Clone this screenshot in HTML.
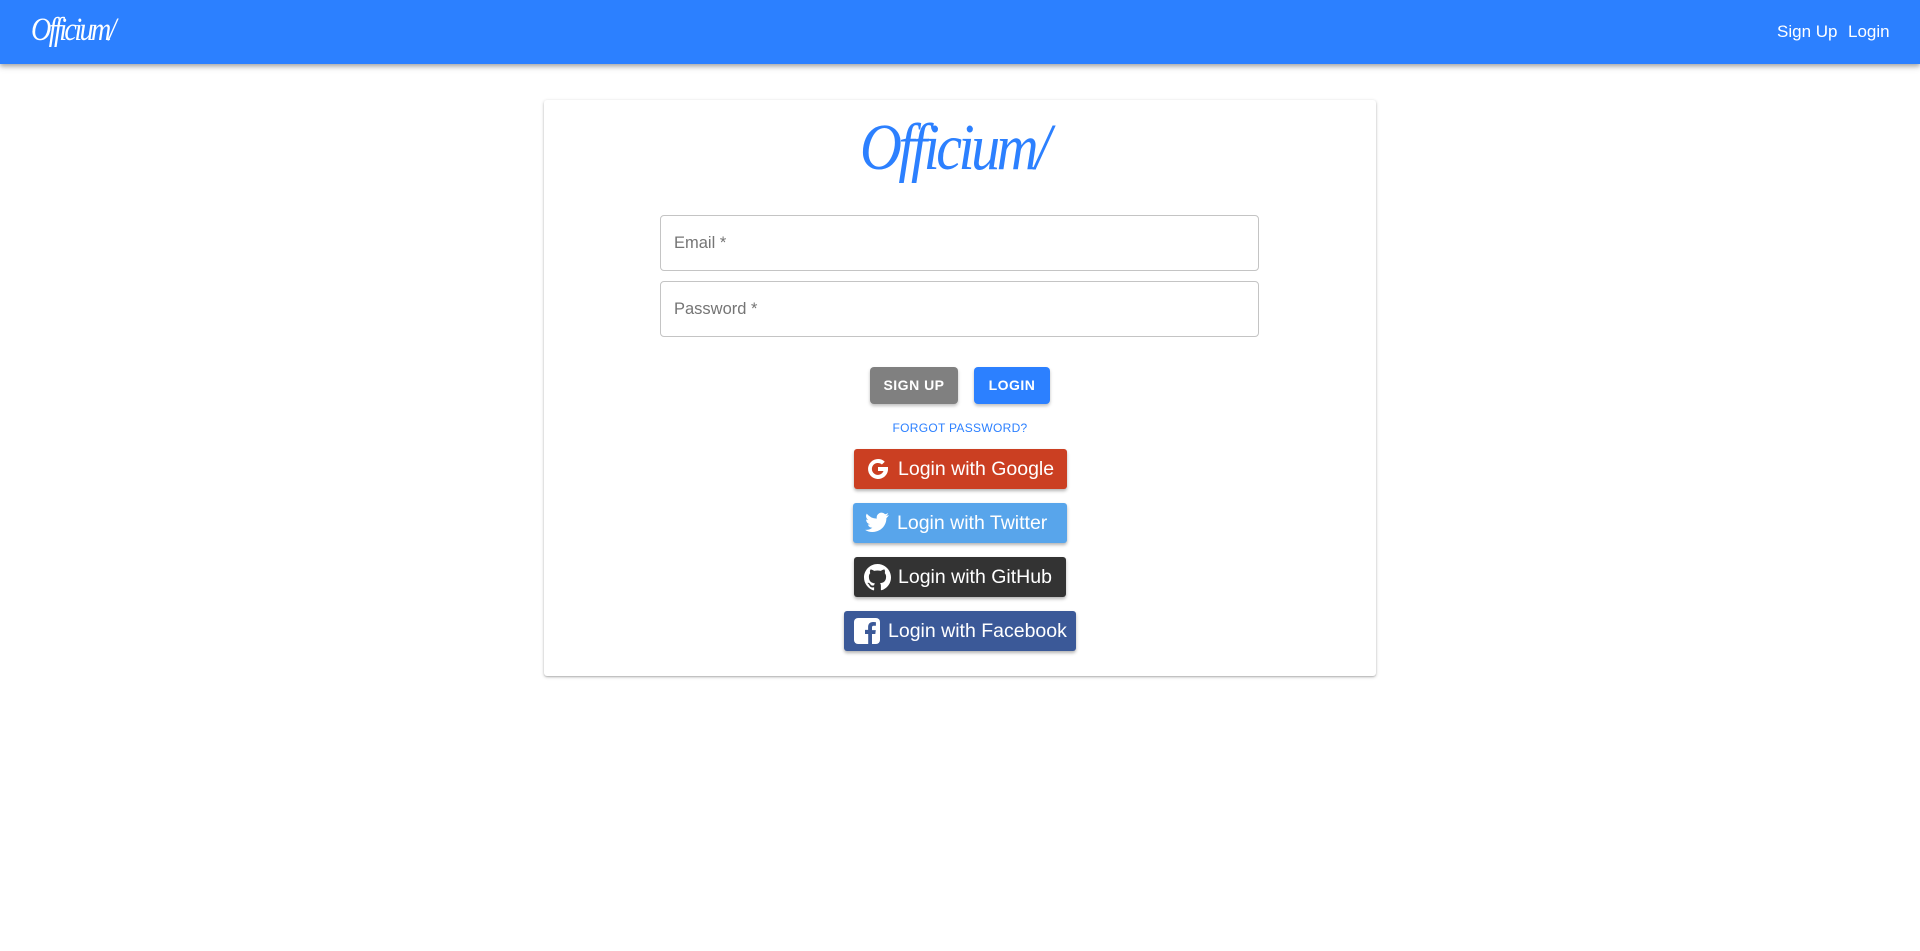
<!DOCTYPE html>
<html><head><meta charset="utf-8"><style>
*{box-sizing:border-box;margin:0;padding:0}
body{width:1920px;height:951px;background:#fff;font-family:"Liberation Sans",sans-serif;position:relative;overflow:hidden}
.hdr{position:absolute;left:0;top:0;width:1920px;height:64px;background:#2c80ff;box-shadow:0 2px 4px rgba(0,0,0,.25),0 4px 6px rgba(0,0,0,.12)}
.logo{position:absolute;font-family:"Liberation Serif",serif;font-style:italic;color:#fff}
.nav{position:absolute;top:22px;color:#fff;font-size:17px}
.card{position:absolute;left:544px;top:100px;width:832px;height:576px;background:#fff;border-radius:3px;box-shadow:0 1px 3px rgba(0,0,0,.25),0 1px 1px rgba(0,0,0,.12)}
.inp{position:absolute;left:660px;width:599px;height:56px;border:1px solid #c4c4c4;border-radius:4px;color:#757575;font-size:16.5px;padding:18px 0 0 13px}
.btn{position:absolute;top:367px;height:37px;border-radius:4px;color:#fff;font-size:14px;font-weight:bold;letter-spacing:.5px;text-align:center;line-height:37px;box-shadow:0 2px 3px rgba(0,0,0,.25)}
.soc{position:absolute;height:40px;border-radius:3px;color:#fff;font-size:19.5px;line-height:40px;box-shadow:0 2px 3px rgba(0,0,0,.3);white-space:nowrap}
.soc svg{position:absolute;top:7px}
</style></head><body>
<div class="hdr">
 <div class="logo" style="left:31px;top:12px;font-size:33px;letter-spacing:-3px;transform:scaleX(.85);transform-origin:left">Officium/</div>
 <div class="nav" style="left:1777px">Sign Up</div>
 <div class="nav" style="left:1848px">Login</div>
</div>
<div class="card"></div>
<div class="logo" style="left:860px;top:110px;font-size:66px;color:#2c80ff;letter-spacing:-4px;transform:scaleX(.88);transform-origin:left">Officium/</div>
<div class="inp" style="top:215px">Email *</div>
<div class="inp" style="top:281px">Password *</div>
<div class="btn" style="left:870px;width:88px;background:#808080">SIGN UP</div>
<div class="btn" style="left:974px;width:76px;background:#2c80ff">LOGIN</div>
<div style="position:absolute;left:0;width:1920px;top:421px;text-align:center;color:#2c80ff;font-size:12px;letter-spacing:.3px">FORGOT PASSWORD?</div>
<div class="soc" style="left:854px;top:449px;width:213px;background:#cb3f22;padding-left:44px">
<svg style="left:11px" width="26" height="26" viewBox="0 0 26 26"><path d="M13 3a10 10 0 1 0 10 11v-3H13v4h5.5a6 6 0 1 1-1.6-6.5l2.9-2.8A10 10 0 0 0 13 3z" fill="#fff"/></svg>Login with Google</div>
<div class="soc" style="left:853px;top:503px;width:214px;background:#58a5eb;padding-left:44px">
<svg style="left:10px" width="28" height="26" viewBox="0 0 24 24"><path fill="#fff" d="M23 4.6a9 9 0 0 1-2.6.7 4.5 4.5 0 0 0 2-2.5 9 9 0 0 1-2.9 1.1 4.5 4.5 0 0 0-7.7 4.1A12.8 12.8 0 0 1 2.5 3.3a4.5 4.5 0 0 0 1.4 6 4.5 4.5 0 0 1-2-.6 4.5 4.5 0 0 0 3.6 4.5 4.5 4.5 0 0 1-2 .1 4.5 4.5 0 0 0 4.2 3.1A9 9 0 0 1 1 18.3 12.8 12.8 0 0 0 20.7 7.5 9 9 0 0 0 23 4.6z"/></svg>Login with Twitter</div>
<div class="soc" style="left:854px;top:557px;width:212px;background:#333;padding-left:44px">
<svg style="left:10px" width="27" height="27" viewBox="0 0 16 16"><path fill="#fff" d="M8 0C3.6 0 0 3.6 0 8c0 3.500 2.3 6.5 5.5 7.6.4.1.5-.2.5-.4v-1.4c-2.2.5-2.7-1-2.7-1-.4-.9-.9-1.2-.9-1.200-.7-.5.1-.5.1-.5.8.1 1.2.8 1.2.8.7 1.2 1.9.9 2.3.7.1-.5.3-.9.5-1.1-1.8-.2-3.6-.9-3.6-4 0-.9.3-1.6.8-2.1-.1-.2-.4-1 .1-2.1 0 0 .7-.2 2.2.8a7.5 7.5 0 0 1 4 0c1.5-1 2.2-.8 2.2-.8.4 1.1.2 1.9.1 2.1.5.6.8 1.3.8 2.1 0 3.1-1.9 3.7-3.6 3.9.3.3.5.8.5 1.5v2.2c0 .2.1.5.6.4A8 8 0 0 0 16 8c0-4.4-3.6-8-8-8z"/></svg>Login with GitHub</div>
<div class="soc" style="left:844px;top:611px;width:232px;background:#3b5998;padding-left:44px">
<svg style="left:10px" width="26" height="26" viewBox="0 0 26 26"><rect width="26" height="26" rx="4" fill="#fff"/><path fill="#3b5998" d="M18 26V16h3.3l.5-3.9H18V9.6c0-1.1.3-1.9 1.9-1.9h2V4.2c-.4 0-1.6-.2-2.9-.2-2.9 0-4.9 1.8-4.9 5v2.9H11V16h3.2v10z"/></svg>Login with Facebook</div>
</body></html>
